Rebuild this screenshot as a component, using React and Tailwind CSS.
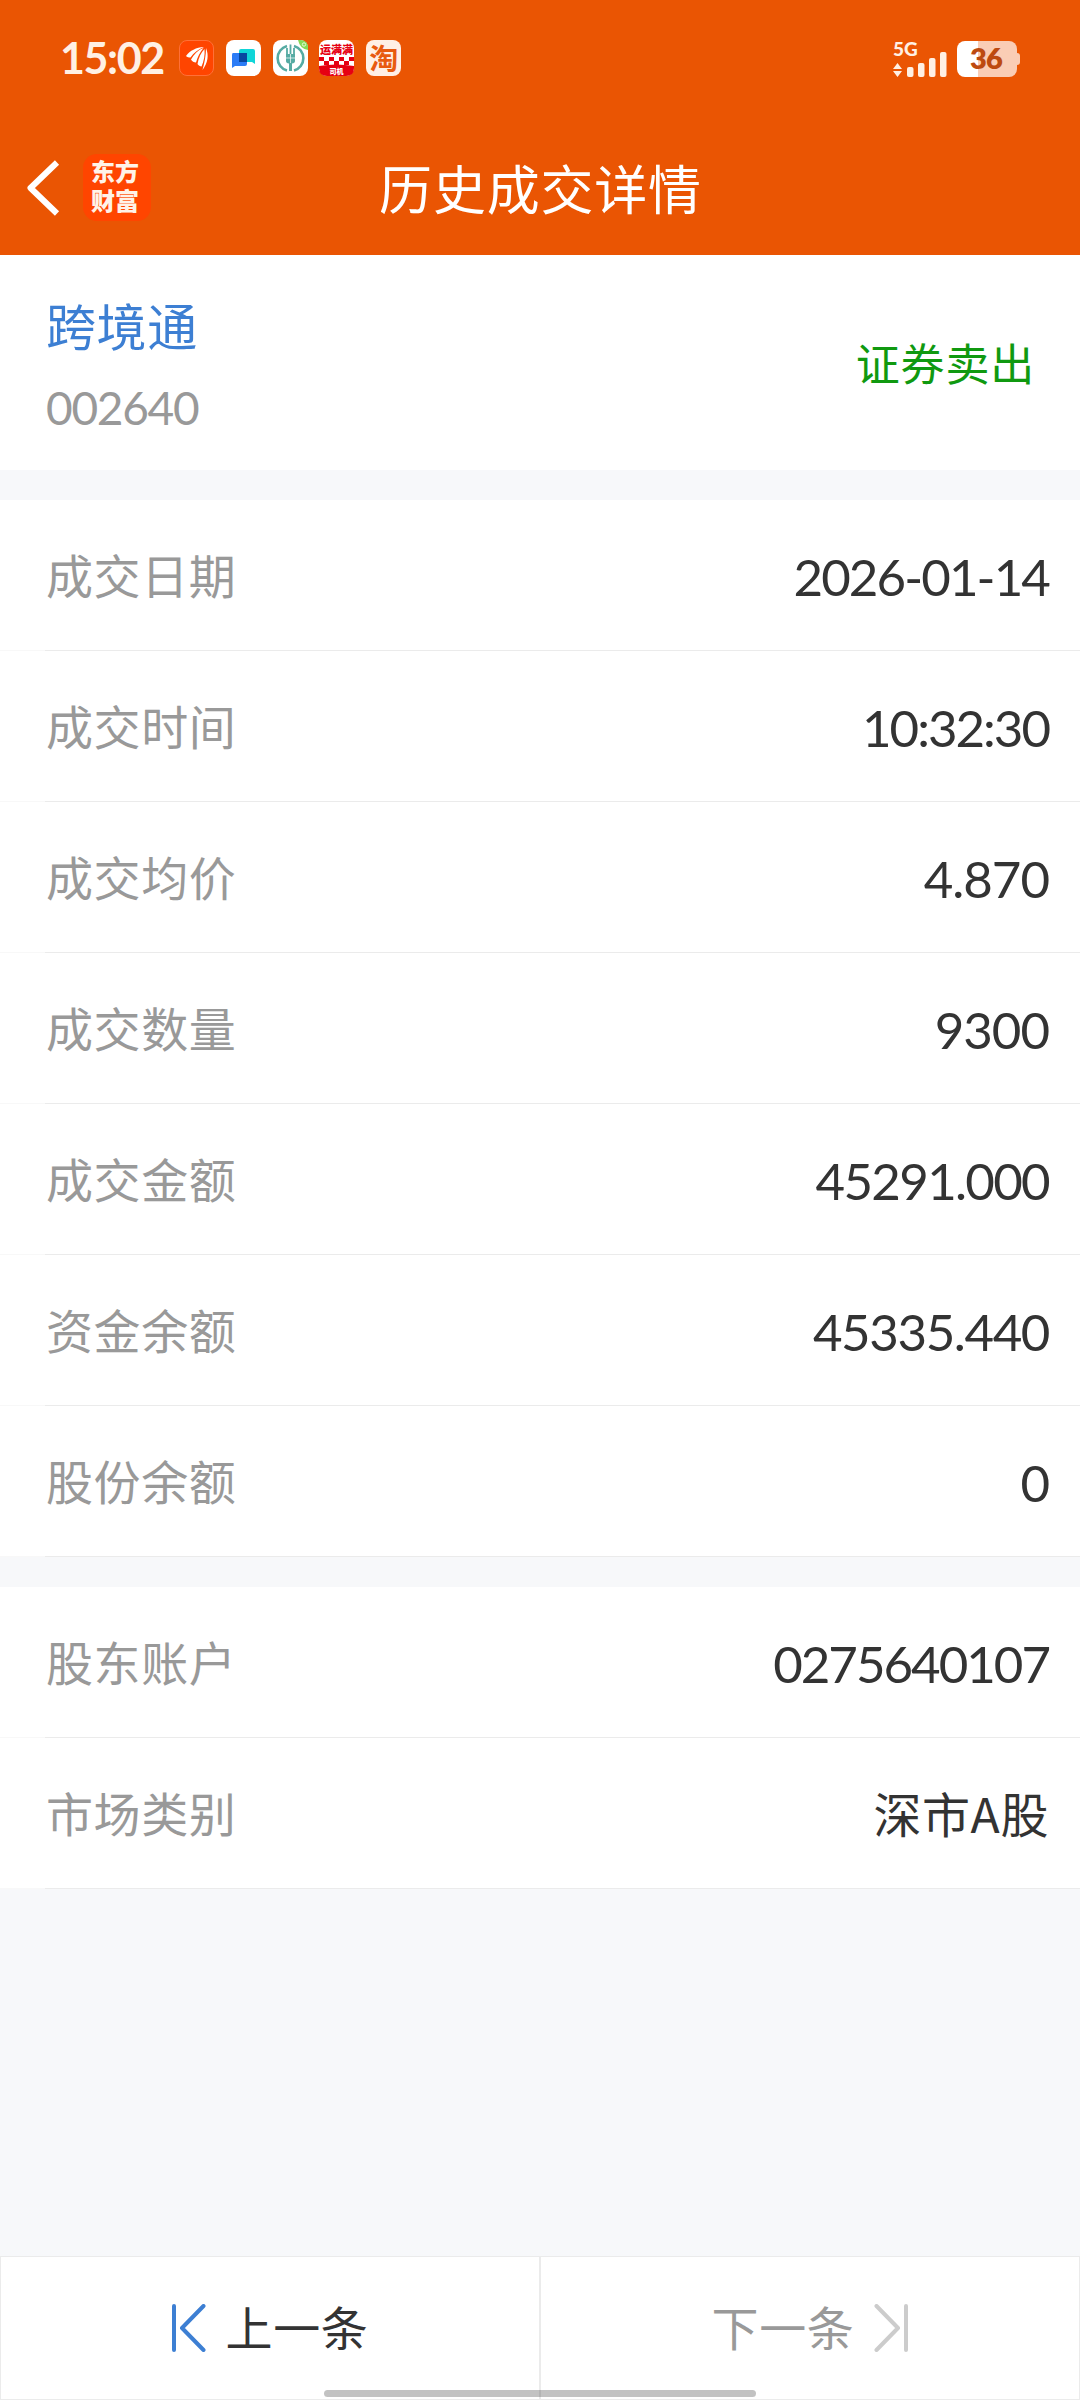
const CJK = "font-['Noto_Sans_CJK_SC',sans-serif]";
const NUM = "font-['Lato','Noto_Sans_CJK_SC',sans-serif]";

const DEAL_ROWS = [
  { label: "成交日期", value: "2026-01-14", tracking: "tracking-[-1.9px]" },
  { label: "成交时间", value: "10:32:30", tracking: "tracking-[-2px]" },
  { label: "成交均价", value: "4.870", tracking: "tracking-[-1px]" },
  { label: "成交数量", value: "9300", tracking: "tracking-[-1px]" },
  { label: "成交金额", value: "45291.000", tracking: "tracking-[-1.7px]" },
  { label: "资金余额", value: "45335.440", tracking: "tracking-[-1.4px]" },
  { label: "股份余额", value: "0", tracking: "tracking-[-1px]" },
];

const ACCOUNT_ROWS = [
  { label: "股东账户", value: "0275640107", tracking: "tracking-[-2px]" },
  { label: "市场类别", value: "深市A股", cjk: true },
];

const StockAppIcon = () => (
  <svg viewBox="0 0 35 36" className="h-9 w-[35px]">
    <rect x="0.5" y="0.5" width="34" height="35" rx="7.5" fill="#ff4500" stroke="#ff7038" />
    <path d="M7 16C11 10.500 17 7.500 25 7C19 9.500 14.500 13 11.500 17.500C10 17.500 8 17 7 16Z" fill="#fff" />
    <path d="M12 19.500C15 14 19 10 24.500 8C21 12 18.500 17 17 22.500C15 22.500 13 21.500 12 19.500Z" fill="#fff" />
    <path d="M18.500 24C19.500 18 22 12.500 25.500 9C26 15 25 21 22.500 26.500C21 26.500 19.500 25.500 18.500 24Z" fill="#fff" />
    <path d="M27 8C30 15 29 23 23.500 30C25.500 23 27 15 27 8Z" fill="#fff" />
  </svg>
);

const ChatAppIcon = () => (
  <svg viewBox="0 0 35 36" className="h-9 w-[35px]">
    <rect width="35" height="36" rx="8" fill="#fff" />
    <path d="M15 9H27Q29 9 29 11V24L26 22H13V11Q13 9 15 9Z" fill="#10d5d8" />
    <path d="M7 13H21V24Q21 26 19 26H9L6 28V15Q6 13 7 13Z" fill="#2b7cf6" />
    <path d="M13 13H21V22H13Z" fill="#0846a0" />
  </svg>
);

const BankAppIcon = () => (
  <svg viewBox="0 0 35 36" className="h-9 w-[35px]">
    <rect width="35" height="36" rx="8" fill="#fff" />
    <path d="M25 0H27Q35 0 35 8V10Q27 9 25 0Z" fill="#86d957" />
    <circle cx="31" cy="4.500" r="1.700" fill="none" stroke="#e6ffd9" />
    <path d="M14 6A12.700 12.700 0 0 0 14 30.500M21 6A12.700 12.700 0 0 1 21 30.500" fill="none" stroke="#56aba3" strokeWidth="2.6" />
    <path d="M17.500 4.500V14M14 8V14M21 8V14" stroke="#56aba3" strokeWidth="1.8" />
    <path d="M13 14H22V21Q22 23 19 23.500V31H16V23.500Q13 23 13 21Z" fill="#56aba3" />
    <path d="M13 18H22M17.500 14V23" stroke="#fff" strokeWidth="0.7" />
  </svg>
);

const FreightAppIcon = () => (
  <svg viewBox="0 0 35 36" className="h-9 w-[35px]">
    <rect width="35" height="36" rx="8" fill="#fff" />
    <text x="17.500" y="13.500" textAnchor="middle" fontSize="11" fontWeight="900" fill="#e60012" fontFamily="Noto Sans CJK SC">运满满</text>
    <path d="M0 17H5V21H0ZM10 17H15V21H10ZM20 17H25V21H20ZM30 17H35V21H30ZM5 21H10V25H5ZM15 21H20V25H15ZM25 21H30V25H25Z" fill="#e60012" />
    <path d="M0 26Q17 23 35 26V28Q35 36 27 36H8Q0 36 0 28Z" fill="#e60012" />
    <text x="17.500" y="34" textAnchor="middle" fontSize="7" fontWeight="900" fill="#fff" fontFamily="Noto Sans CJK SC">司机</text>
  </svg>
);

const ShopAppIcon = () => (
  <div className="flex h-9 w-[35px] items-center justify-center rounded-lg bg-[#fff0e6] pb-0.5 text-[29px] leading-none font-bold text-[#e85a10]">
    淘
  </div>
);

const StatusBar = () => (
  <div className="flex h-[116px] items-start pt-10 pr-[60px] pl-[60px]">
    <span className={`${NUM} w-[119px] text-[43px] leading-9 font-bold tracking-[-1.4px] text-[#fff0e4]`}>15:02</span>
    <div className="flex gap-[11.8px]">
      <StockAppIcon />
      <ChatAppIcon />
      <BankAppIcon />
      <FreightAppIcon />
      <ShopAppIcon />
    </div>
    <div className="ml-auto flex">
      <div className="h-[38px] w-[64px]">
        <div className={`${NUM} h-[22px] text-[19px] leading-[17px] font-black text-[#fff0e4]`}>5G</div>
        <svg viewBox="0 0 56 26" className="-mt-[10px] h-[26px] w-14" fill="#fff0e4">
          <path d="M0 17L4.500 11L9 17ZM0 19L4.500 25L9 19Z" />
          <rect x="14" y="15" width="6.500" height="10" rx="2" />
          <rect x="25" y="11" width="6.500" height="14" rx="2" />
          <rect x="36" y="6" width="6.500" height="19" rx="2" />
          <rect x="47" y="0" width="6.500" height="25" rx="2" />
        </svg>
      </div>
      <div className="flex items-center">
        <div className={`${NUM} flex h-9 w-[60px] items-center justify-center rounded-lg bg-linear-to-r from-white from-35% to-[#facdb5] to-35% pr-0.5 pb-[3px] text-[29px] leading-none font-extrabold tracking-[-0.8px] text-[#bd4a10]`}>
          36
        </div>
        <div className="h-3 w-[3px] rounded-r-sm bg-[#facdb5]" />
      </div>
    </div>
  </div>
);

const NavBar = () => (
  <div className="grid h-[139px] grid-cols-3 items-start">
    <div className="flex items-center pt-[38px] pl-[26px]">
      <svg viewBox="0 0 34 56" className="h-14 w-[34px]" fill="none" stroke="#fff" strokeWidth="6" strokeLinejoin="round">
        <path d="M31 2.500L4.500 28L31 53.500" />
      </svg>
      <div className="ml-[23px] h-[67px] w-[68px] rounded-[14px] bg-[#ff4500] pt-0.5 pl-2 text-[24px] leading-[29px] font-black text-[#fff3e8]">
        <p className="w-[49px] break-all">东方财富</p>
      </div>
    </div>
    <h1 className="pt-[33px] pl-px text-center text-[53px] leading-[76px] tracking-[0.8px] whitespace-nowrap text-white">历史成交详情</h1>
  </div>
);

const DetailRow = ({ label, value, tracking, cjk }) => (
  <div className="flex h-[151px] flex-col bg-white">
    <div className="flex flex-1 items-center justify-between pr-[31px] pl-[46px]">
      <span className="pb-[3px] text-[47px] leading-[70px] tracking-[0.6px] text-[#999]">{label}</span>
      <span className={cjk ? "pb-[3px] text-[48px] leading-[70px] tracking-[0.6px] text-[#333]" : `${NUM} ${tracking} pt-[3px] text-[51px] leading-[70px] text-[#333]`}>
        {value}
      </span>
    </div>
    <div className="flex h-px">
      <div className="w-[45px] bg-[#f8f8f8]" />
      <div className="flex-1 bg-[#ebebeb]" />
    </div>
  </div>
);

const StepIcon = ({ flip, color }) => (
  <svg viewBox="0 0 34 48" className={`h-12 w-[34px] ${flip ? "-scale-x-100" : ""}`} fill="none" stroke={color} strokeWidth="4" strokeLinecap="round" strokeLinejoin="round">
    <path d="M2 2V46M31.500 2L10 24L31.500 46" />
  </svg>
);

export default function App() {
  return (
    <div className={`${CJK} relative flex h-[2400px] w-[1080px] flex-col bg-[#f7f8fa]`}>
      <header className="h-[255px] bg-[#ea5503]">
        <StatusBar />
        <NavBar />
      </header>

      <section className="flex h-[215px] items-center justify-between bg-white pr-[45px] pl-[46px]">
        <div className="pt-1.5">
          <div className="text-[50px] leading-[72px] tracking-[0.6px] text-[#3d7fd3]">跨境通</div>
          <div className={`${NUM} mt-3 text-[46px] leading-[72px] tracking-[-1.3px] text-[#999]`}>002640</div>
        </div>
        <div className="pb-px text-[44px] leading-[66px] tracking-[0.8px] text-[#109910]">证券卖出</div>
      </section>

      <section className="mt-[30px]">
        {DEAL_ROWS.map((row) => (
          <DetailRow key={row.label} {...row} />
        ))}
      </section>

      <section className="mt-[30px]">
        {ACCOUNT_ROWS.map((row) => (
          <DetailRow key={row.label} {...row} />
        ))}
      </section>

      <footer className="mt-auto grid h-36 grid-cols-2 text-[47px] leading-[70px] tracking-[0.6px]">
        <button type="button" className="flex items-center justify-center gap-5 border border-[#ebebeb] bg-white text-[#333]">
          <StepIcon color="#3d7fd3" />
          <span className="pb-[5px]">上一条</span>
        </button>
        <button type="button" className="flex items-center justify-center gap-5 border border-[#ebebeb] bg-white text-[#999]">
          <span className="pb-[5px]">下一条</span>
          <StepIcon flip color="#ccc" />
        </button>
      </footer>

      {/* system gesture bar */}
      <div className="absolute bottom-[3px] left-[324px] h-[7px] w-[432px] rounded-full bg-black/24" />
    </div>
  );
}
